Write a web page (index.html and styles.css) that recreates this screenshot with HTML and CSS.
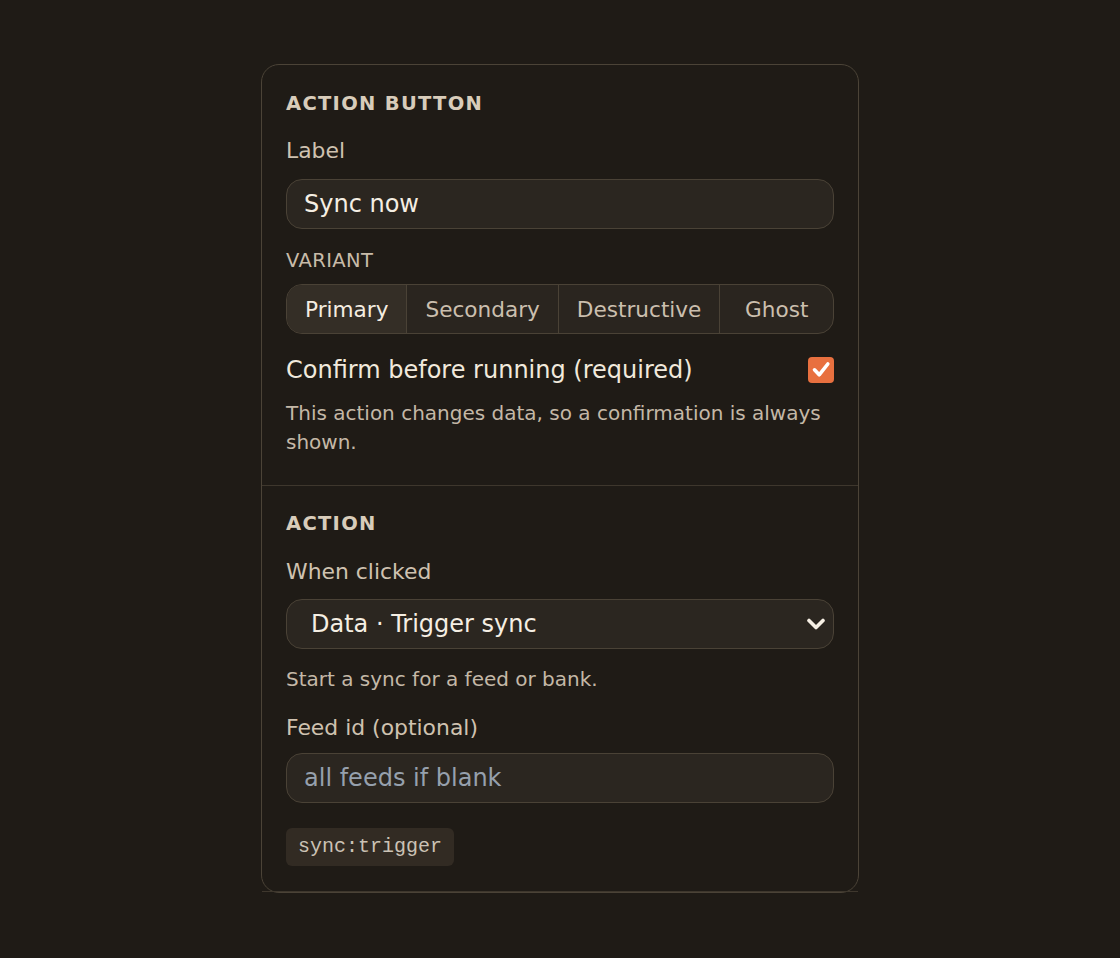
FILE: index.html
```html
<!DOCTYPE html>
<html lang="en">
<head>
  <meta charset="UTF-8" />
  <meta name="viewport" content="width=device-width, initial-scale=1.0" />
  <title>Action button</title>
  <link rel="stylesheet" href="styles.css">
</head>
<body>

  <div class="panel">

    <section class="panel-section first">
      <h2>Action Button</h2>

      <label class="field-label" for="label">Label</label>
      <input class="text-input" type="text" id="label" value="Sync now" />

      <div class="caps-label">Variant</div>
      <div class="segmented">
        <button class="seg active">Primary</button>
        <button class="seg">Secondary</button>
        <button class="seg">Destructive</button>
        <button class="seg">Ghost</button>
      </div>

      <div class="check-row">
        <span>Confirm before running (required)</span>
        <span class="checkbox">
          <svg width="26" height="26" viewBox="0 0 26 26">
            <path d="M6.5 12.8 L11.2 17.8 L19.8 7" fill="none" stroke="#fff" stroke-width="3.6" stroke-linecap="round" stroke-linejoin="round"/>
          </svg>
        </span>
      </div>
      <p class="note note-last">This action changes data, so a confirmation is always shown.</p>
    </section>

    <section class="panel-section">
      <h2>Action</h2>

      <label class="field-label" for="action">When clicked</label>
      <div class="select-wrap">
        <select class="select" id="action">
          <option>Data · Trigger sync</option>
        </select>
        <!-- chevron -->
        <svg class="chevron" width="20" height="12" viewBox="0 0 20 12">
          <path d="M3 2.5 L10 9.5 L17 2.5" fill="none" stroke="#f6efe4" stroke-width="3.6" stroke-linecap="round" stroke-linejoin="round"/>
        </svg>
      </div>
      <p class="note">Start a sync for a feed or bank.</p>

      <label class="field-label feed-label" for="feed">Feed id (optional)</label>
      <input class="text-input feed-input" type="text" id="feed" placeholder="all feeds if blank" />

      <code class="perm">sync:trigger</code>
    </section>

  </div>

</body>
</html>
```

FILE: styles.css
```css
    * {
      margin: 0; padding: 0;
      box-sizing: border-box;
      font-family: "DejaVu Sans", sans-serif;
    }

    body {
      background: #1f1b16;
      color: #d3c6b4;
      padding-top: 64px;
    }

    .panel {
      width: 598px;
      margin: 0 auto;
      border: 1px solid #4b4337;
      border-radius: 18px;
      background: #1f1b16;
    }

    .panel-section {
      display: flex;
      flex-direction: column;
      align-items: stretch;
      padding: 25px 24px 24px;
      border-bottom: 1px solid #3e372d;
    }

    .panel-section.first {
      padding-top: 26px;
    }

    .panel-section:last-child {
      padding-bottom: 25px;
    }

    .panel-section h2 {
      font-size: 19.5px;
      line-height: 26px;
      font-weight: bold;
      text-transform: uppercase;
      letter-spacing: 1.3px;
      color: #d8ccba;
    }

    .field-label {
      margin-top: 18px;
      font-size: 21.9px;
      line-height: 32px;
      color: #cfc2b0;
    }

    .text-input {
      margin-top: 12px;
      width: 100%;
      height: 50px;
      padding: 0 17px;
      border: 1px solid #4a4236;
      border-radius: 16px;
      background: #2b2620;
      color: #f5eee3;
      font-size: 24px;
      outline: none;
    }

    .text-input::placeholder {
      color: #96a0ad;
    }

    .caps-label {
      margin-top: 17px;
      font-size: 19.5px;
      line-height: 30px;
      letter-spacing: 0.4px;
      text-transform: uppercase;
      color: #c8bba9;
    }

    .segmented {
      margin-top: 8px;
      display: flex;
      height: 50px;
      border: 1px solid #4a4236;
      border-radius: 16px;
      background: #2a251f;
      overflow: hidden;
    }

    .seg {
      flex: none;
      padding: 0 18px;
      border: none;
      border-left: 1px solid #4a4236;
      background: none;
      color: #cbbfae;
      font-size: 21.6px;
      cursor: pointer;
    }

    .seg:first-child {
      border-left: none;
    }

    .seg:last-child {
      flex: 1;
    }

    .seg.active {
      background: #342e26;
      color: #f4ede1;
    }

    .check-row {
      margin-top: 20px;
      height: 32px;
      display: flex;
      align-items: center;
      justify-content: space-between;
      font-size: 24px;
      color: #f1e9dc;
    }

    .checkbox {
      width: 26px;
      height: 26px;
      border-radius: 4px;
      background: #e8703f;
      display: flex;
    }

    .note {
      margin-top: 16px;
      font-size: 20px;
      line-height: 29px;
      color: #c4b8a7;
    }

    .note-last {
      margin-top: 13px;
      margin-bottom: 4px;
    }

    .select-wrap {
      position: relative;
      margin-top: 11px;
    }

    .select {
      appearance: none;
      width: 100%;
      height: 50px;
      padding: 0 24px;
      border: 1px solid #4a4236;
      border-radius: 16px;
      background: #2b2620;
      color: #f5eee3;
      font-size: 24px;
      outline: none;
    }

    .chevron {
      position: absolute;
      right: 8px;
      top: 19px;
    }

    .panel-section h2 + .field-label {
      margin-top: 19px;
    }

    .first h2 + .field-label {
      margin-top: 18px;
    }

    .feed-input {
      margin-top: 9px;
    }

    .perm {
      margin-top: 25px;
      align-self: flex-start;
      padding: 6px 12px;
      border-radius: 6px;
      background: #322b23;
      color: #cbc2b5;
      font-family: "Liberation Mono", monospace;
      font-size: 20px;
      line-height: 26px;
    }
```
